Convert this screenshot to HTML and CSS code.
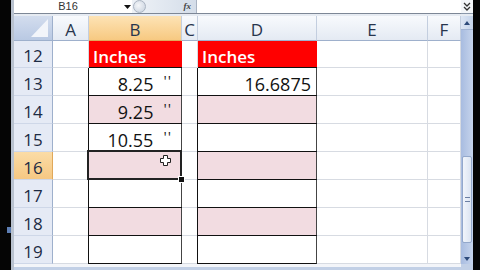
FILE: index.html
```html
<!DOCTYPE html>
<html>
<head>
<meta charset="utf-8">
<link rel="stylesheet" href="styles.css">
</head>
<body>
<div class="screen">
  <div class="edge-l"><div class="tick"></div></div>
  <div class="app">
    <div class="fbar">
      <div class="namebox">B16</div>
      <div class="nb-arrow"><svg width="7" height="4" viewBox="0 0 7 4"><path d="M0 0h7L3.5 4z" fill="#111"/></svg></div>
      <div class="fxzone"><span class="knob"></span><span class="fx">fx</span></div>
      <div class="finput"></div>
    </div>
    <div class="fgap"></div>
    <div class="sheet">
      <div class="corner"><span class="tri"></span></div>
      <div class="ch">A</div>
      <div class="ch sel">B</div>
      <div class="ch">C</div>
      <div class="ch">D</div>
      <div class="ch">E</div>
      <div class="ch">F</div>

      <div class="rh">12</div>
      <div class="c"></div>
      <div class="c red">Inches</div>
      <div class="c"></div>
      <div class="c red">Inches</div>
      <div class="c"></div>
      <div class="c"></div>

      <div class="rh">13</div>
      <div class="c"></div>
      <div class="c bx nb"><span>8.25</span><span class="in">''</span></div>
      <div class="c"></div>
      <div class="c bx nd">16.6875</div>
      <div class="c"></div>
      <div class="c"></div>

      <div class="rh">14</div>
      <div class="c"></div>
      <div class="c bx pink nb"><span>9.25</span><span class="in">''</span></div>
      <div class="c"></div>
      <div class="c bx pink"></div>
      <div class="c"></div>
      <div class="c"></div>

      <div class="rh">15</div>
      <div class="c"></div>
      <div class="c bx nb"><span>10.55</span><span class="in">''</span></div>
      <div class="c"></div>
      <div class="c bx"></div>
      <div class="c"></div>
      <div class="c"></div>

      <div class="rh sel">16</div>
      <div class="c"></div>
      <div class="c bx pink active"><svg class="cursor" width="11" height="11" viewBox="0 0 11 11"><path d="M3.5 0.5h4v3h3v4h-3v3h-4v-3h-3v-4h3z" fill="#fff" stroke="#222" stroke-width="1"/></svg></div>
      <div class="c"></div>
      <div class="c bx pink"></div>
      <div class="c"></div>
      <div class="c"></div>

      <div class="rh">17</div>
      <div class="c"></div>
      <div class="c bx"></div>
      <div class="c"></div>
      <div class="c bx"></div>
      <div class="c"></div>
      <div class="c"></div>

      <div class="rh">18</div>
      <div class="c"></div>
      <div class="c bx pink"></div>
      <div class="c"></div>
      <div class="c bx pink"></div>
      <div class="c"></div>
      <div class="c"></div>

      <div class="rh">19</div>
      <div class="c"></div>
      <div class="c bx"></div>
      <div class="c"></div>
      <div class="c bx"></div>
      <div class="c"></div>
      <div class="c"></div>
    </div>
    <div class="hscroll"></div>
  </div>
  <div class="vscroll">
    <div class="expand"><svg width="8" height="9" viewBox="0 0 8 9"><path d="M1 1l3 3 3-3M1 5l3 3 3-3" fill="none" stroke="#333" stroke-width="1.3"/></svg></div>
    <div class="vs-gap"></div>
    <div class="vs-up"><svg width="6" height="4" viewBox="0 0 6 4"><path d="M0 4h6L3 0z" fill="#2d4a7a"/></svg></div>
    <div class="vs-track"><div class="thumb"><span class="grip"></span></div></div>
    <div class="vs-down"><svg width="6" height="4" viewBox="0 0 6 4"><path d="M0 0h6L3 4z" fill="#2d4a7a"/></svg></div>
    <div class="vs-foot"></div>
  </div>
  <div class="edge-r"></div>
</div>
</body>
</html>
```
FILE: styles.css
```css
* { box-sizing: border-box; }
html, body { margin: 0; padding: 0; }
body { width: 480px; height: 270px; overflow: hidden; background: #000; }

.screen { display: flex; width: 480px; height: 270px; }

.edge-l { width: 11px; background: #050505; display: flex; flex-direction: column; }
.tick { margin-top: 227px; margin-left: 7px; width: 4px; height: 6px; background: #5d7eb4; }

.app { width: 450px; display: flex; flex-direction: column; background: #fff; border-left: 3px solid #b9c2cf; }

.fbar { height: 14px; display: flex; border-bottom: 1px solid #7d8796; background: #fff; }
.namebox { width: 108px; font: 11px/13px "Liberation Sans", Arial, sans-serif; color: #333; text-align: center; }
.nb-arrow { width: 10px; display: flex; align-items: center; justify-content: center; }
.fxzone { width: 64px; display: flex; align-items: center; justify-content: space-between; background: linear-gradient(90deg, #eef2f7 0%, #dfe6ef 60%, #d4dde9 100%); padding-right: 5px; }
.knob { width: 13px; height: 13px; border-radius: 50%; background: radial-gradient(circle at 40% 40%, #f4f6f9, #c6d0dd); border: 1px solid #aab4c2; margin-left: 1px; }
.fx { font: italic bold 9px/13px "Liberation Serif", serif; color: #444; }
.finput { flex: 1; border-left: 1px solid #a9b3c2; background: #fff; }

.fgap { height: 2px; background: #e6ebf2; }

.sheet {
  flex: 1;
  display: grid;
  grid-template-columns: 39px 36px 93px 16px 119px 111px 33px;
  grid-template-rows: 25px 27px repeat(7, 28px);
  font-family: "Open Sans", "Liberation Sans", sans-serif;
}

.corner { position: relative; background: linear-gradient(#d3ddee, #b9c9e3); border-right: 1px solid #9eb0cc; border-bottom: 1px solid #9eb0cc; overflow: hidden; }
.tri { position: absolute; right: 4px; bottom: 3px; width: 0; height: 0; border-left: 17px solid transparent; border-bottom: 18px solid #f2f5fa; }

.ch {
  background: linear-gradient(#f8fafd, #e4eaf3);
  border-right: 1px solid #c3cedf;
  border-bottom: 1px solid #9eb0cc;
  display: flex; align-items: center; justify-content: center;
  font-size: 17px; line-height: 1; color: #27354d; padding-top: 2px;
}
.ch.sel { background: linear-gradient(#fde3b5, #f7c981); border-bottom-color: #e0a85a; }

.rh {
  background: #e5eaf5;
  border-right: 1px solid #9eb0cc;
  border-bottom: 1px solid #ced7e8;
  display: flex; align-items: center; justify-content: center;
  font-size: 17px; line-height: 1; color: #1d2b44; padding-top: 3px;
}
.rh.sel { background: linear-gradient(#fbdca6, #f6c883); border-right-color: #e0a85a; }

.c {
  border-right: 1px solid #d7dbe2;
  border-bottom: 1px solid #d7dbe2;
  background: #fff;
  display: flex; align-items: center;
  font-size: 18px; line-height: 1; color: #111;
  padding-top: 4px;
}
.c.red { background: #ff0000; color: #fff; font-size: 17px; font-weight: 600; padding-left: 4px; border-color: #ff0000; }
.c.pink { background: #f2dce1; }
.c.bx { border-right-color: #444; border-bottom-color: #111; box-shadow: -1px 0 0 #111, 0 -1px 0 #111; }
.c.nb { justify-content: flex-end; padding-right: 9px; }
.c.nd { justify-content: flex-end; padding-right: 5px; }
.in { margin-left: 10px; font-size: 15px; align-self: center; margin-top: -6px; letter-spacing: 1px; color: #222; }

.c.active { position: relative; }
.c.active::after { content: ""; position: absolute; left: -2px; top: -2px; right: -1px; bottom: -1px; border: 2px solid #222; }
.c.active::before { content: ""; position: absolute; right: -4px; bottom: -4px; width: 5px; height: 5px; background: #111; border: 1px solid #fff; z-index: 2; }
.cursor { position: absolute; left: 71px; top: 3px; z-index: 3; }

.hscroll { height: 6px; background: linear-gradient(#f3f5f9 0 3px, #c2d0e6 3px); }

.vscroll { width: 12px; display: flex; flex-direction: column; background: #b6c7e3; }
.expand { height: 14px; background: #f4f6f9; display: flex; align-items: center; justify-content: center; border-bottom: 1px solid #8a97aa; }
.vs-gap { height: 2px; background: #e6ebf2; }
.vs-up { height: 14px; background: linear-gradient(90deg, #dde6f4, #c4d3ea); display: flex; align-items: center; justify-content: center; border-bottom: 1px solid #a2b4d3; }
.vs-track { flex: 1; background: linear-gradient(90deg, #a8bce0, #c6d4ec); padding-top: 126px; }
.thumb { height: 87px; margin: 0 1px; background: linear-gradient(90deg, #f1f5fb, #dbe4f2); border: 1px solid #93a8cb; border-radius: 2px; display: flex; align-items: center; justify-content: center; }
.grip { width: 5px; height: 5px; border-top: 1px solid #6b7fa3; border-bottom: 1px solid #6b7fa3; }
.vs-down { height: 14px; background: linear-gradient(90deg, #a8bce0, #c6d4ec); display: flex; align-items: flex-end; justify-content: center; padding-bottom: 3px; }
.vs-foot { height: 6px; background: #c2d0e6; }

.edge-r { width: 7px; background: #050505; }
```
